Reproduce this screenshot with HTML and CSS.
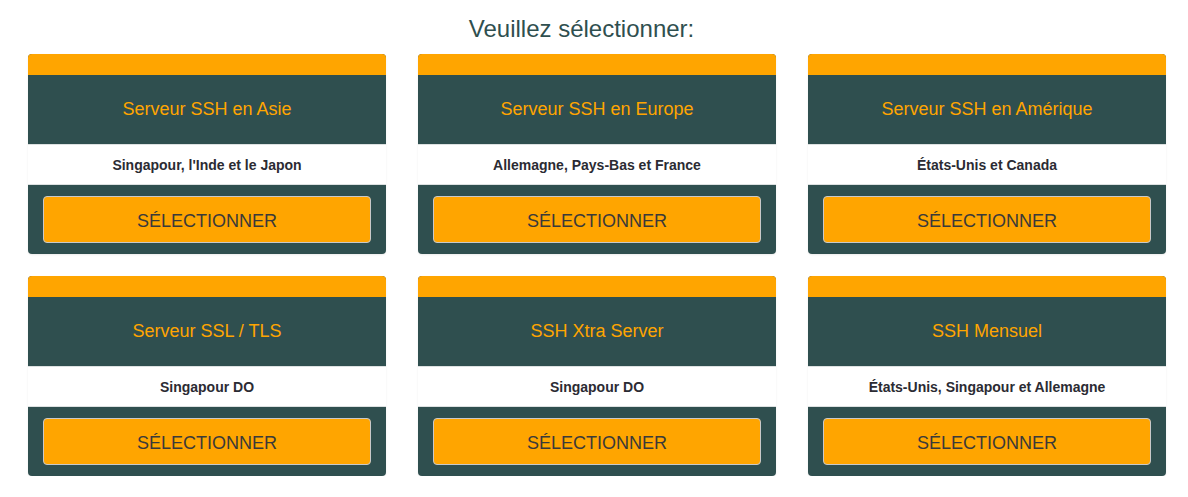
FILE: index.html
```html
<!DOCTYPE html>
<html>
	<head>
		<meta charset="UTF-8">
		<title>Veuillez sélectionner</title>
		<link rel="stylesheet" href="styles.css">
	</head>
	<body>
		<div class="wrap">
			<h1 class="page-title">Veuillez sélectionner:</h1>
			<div class="grid">
				<div class="card">
					<div class="card-top"></div>
					<div class="card-head">Serveur SSH en Asie</div>
					<div class="card-sub">Singapour, l'Inde et le Japon</div>
					<div class="card-foot"><a href="javascript:;" class="btn">SÉLECTIONNER</a></div>
				</div>
				<div class="card">
					<div class="card-top"></div>
					<div class="card-head">Serveur SSH en Europe</div>
					<div class="card-sub">Allemagne, Pays-Bas et France</div>
					<div class="card-foot"><a href="javascript:;" class="btn">SÉLECTIONNER</a></div>
				</div>
				<div class="card">
					<div class="card-top"></div>
					<div class="card-head">Serveur SSH en Amérique</div>
					<div class="card-sub">États-Unis et Canada</div>
					<div class="card-foot"><a href="javascript:;" class="btn">SÉLECTIONNER</a></div>
				</div>
				<div class="card">
					<div class="card-top"></div>
					<div class="card-head">Serveur SSL / TLS</div>
					<div class="card-sub">Singapour DO</div>
					<div class="card-foot"><a href="javascript:;" class="btn">SÉLECTIONNER</a></div>
				</div>
				<div class="card">
					<div class="card-top"></div>
					<div class="card-head">SSH Xtra Server</div>
					<div class="card-sub">Singapour DO</div>
					<div class="card-foot"><a href="javascript:;" class="btn">SÉLECTIONNER</a></div>
				</div>
				<div class="card">
					<div class="card-top"></div>
					<div class="card-head">SSH Mensuel</div>
					<div class="card-sub">États-Unis, Singapour et Allemagne</div>
					<div class="card-foot"><a href="javascript:;" class="btn">SÉLECTIONNER</a></div>
				</div>
			</div>
		</div>
	</body>
</html>
```

FILE: styles.css
```css
*{
	margin:0px;
	padding:0px;
	box-sizing: border-box;
}
body{
	background: #fff;
	font-family: "Liberation Sans", Arial, sans-serif;
	color: #333;
}
.wrap{
	width: 1138px;
	margin-left: 28px;
}
.page-title{
	font-size: 24px;
	font-weight: normal;
	line-height: 27px;
	color: #2f4f4f;
	text-align: center;
	padding-top: 15px;
	padding-right: 31px;
	margin-bottom: 12px;
}
.grid{
	display: grid;
	grid-template-columns: repeat(3, 358px);
	column-gap: 32px;
	row-gap: 22px;
}
.card{
	background: #2f4f4f;
	border-radius: 4px;
	overflow: hidden;
	box-shadow: 0 1px 2px rgba(0,0,0,0.08);
}
.card-top{
	height: 21px;
	background: #ffa500;
}
.card-head{
	height: 69px;
	line-height: 69px;
	text-align: center;
	font-size: 18px;
	color: #ffa500;
}
.card-sub{
	height: 41px;
	line-height: 40px;
	background: #fff;
	border-top: 1px solid #dde1e1;
	border-bottom: 1px solid #dde1e1;
	text-align: center;
	font-size: 14px;
	font-weight: bold;
	color: #2b2b33;
}
.card-foot{
	padding: 11px 15px;
}
.btn{
	display: block;
	height: 47px;
	line-height: 45px;
	padding-top: 2px;
	background: #ffa500;
	border: 1px solid #c9c9c9;
	border-radius: 4px;
	text-align: center;
	font-size: 18px;
	color: #3a3a3a;
	text-decoration: none;
}
```
